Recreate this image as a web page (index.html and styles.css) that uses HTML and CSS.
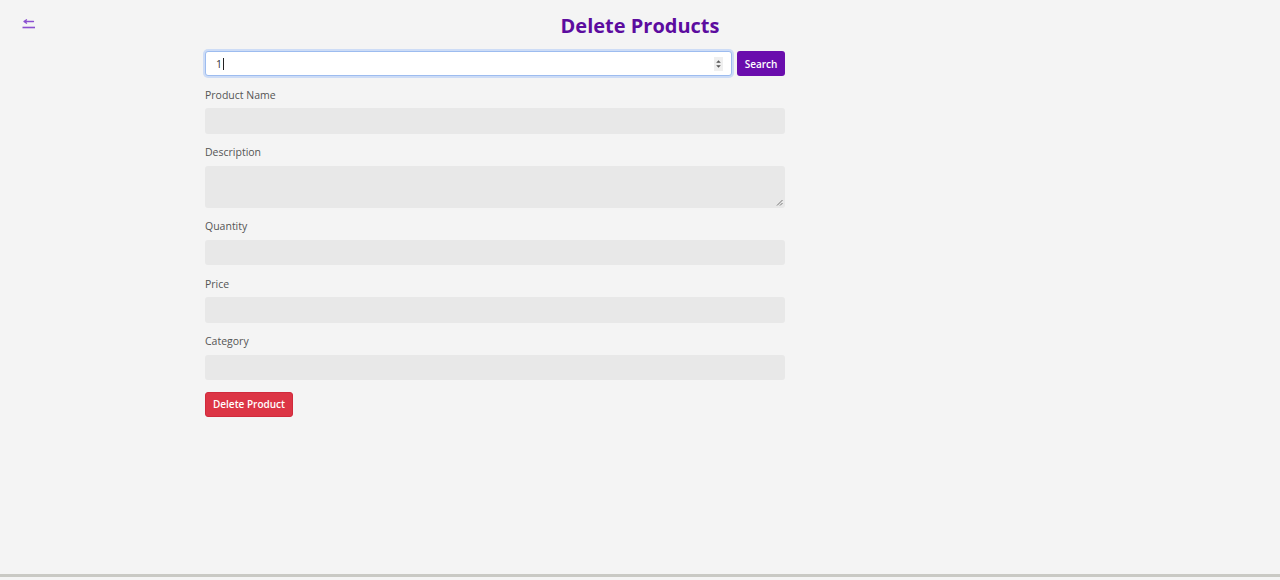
FILE: index.html
```html
<!DOCTYPE html>
<html lang="en">
<head>
<meta charset="utf-8">
<title>Delete Products</title>
<link rel="stylesheet" href="styles.css">
</head>
<body>
<div class="page">
  <header class="header">
    <a class="back" href="#" aria-label="Back">
      <svg width="14" height="10" viewBox="0 0 14 10"><path d="M2 2.5 H11.5 M2 2.5 L4.5 0.8 M2 2.5 L4.5 4.2" stroke="#8a4fd0" stroke-width="1.3" fill="none" stroke-linecap="round"/><path d="M0.5 8.5 H13" stroke="#8a4fd0" stroke-width="1.6"/></svg>
    </a>
    <h1 class="title">Delete Products</h1>
  </header>
  <form class="form">
    <div class="search-row">
      <div class="search-box">
        <span class="search-value">1</span><span class="caret"></span>
        <span class="spinner">
          <svg width="7" height="12" viewBox="0 0 7 12"><path d="M1.2 4.8 L3.5 2.2 L5.8 4.8 Z" fill="#555"/><path d="M1.2 7.2 L3.5 9.8 L5.8 7.2 Z" fill="#555"/></svg>
        </span>
      </div>
      <button type="button" class="btn btn-search">Search</button>
    </div>
    <div class="field">
      <label class="label">Product Name</label>
      <div class="input"></div>
    </div>
    <div class="field">
      <label class="label">Description</label>
      <div class="input textarea">
        <svg class="grip" width="7" height="7" viewBox="0 0 7 7"><path d="M6.5 1 L1 6.5 M6.5 4 L4 6.5" stroke="#777" stroke-width="1"/></svg>
      </div>
    </div>
    <div class="field">
      <label class="label">Quantity</label>
      <div class="input"></div>
    </div>
    <div class="field">
      <label class="label">Price</label>
      <div class="input"></div>
    </div>
    <div class="field">
      <label class="label">Category</label>
      <div class="input"></div>
    </div>
    <div class="actions">
      <button type="button" class="btn btn-delete">Delete Product</button>
    </div>
  </form>
</div>
</body>
</html>
```
FILE: styles.css
```css
* { box-sizing: border-box; }
html, body { margin: 0; padding: 0; }
body {
  background: #f4f4f4;
  font-family: "Open Sans", "Noto Sans", "Liberation Sans", sans-serif;
  color: #444;
}
.page {
  height: 577px;
  border-bottom: 3px solid #c9c9c4;
}
.header {
  display: flex;
  align-items: center;
  height: 51px;
  padding-left: 22px;
}
.back {
  display: flex;
  width: 14px;
  margin-top: -4px;
}
.title {
  flex: 1;
  margin: 0 0 0 -36px;
  text-align: center;
  font-size: 20px;
  font-weight: 700;
  color: #5c0c9f;
}
.form {
  width: 580px;
  margin-left: 205px;
  display: flex;
  flex-direction: column;
}
.search-row {
  display: flex;
  gap: 5px;
  height: 25px;
}
.search-box {
  flex: 1;
  display: flex;
  align-items: center;
  background: #fff;
  border: 1px solid #9dbcef;
  box-shadow: 0 0 0 2px #cddcf6;
  border-radius: 3px;
  padding-left: 10px;
  font-size: 10.5px;
  color: #333;
}
.caret {
  width: 1px;
  height: 12px;
  background: #222;
  margin-left: 1px;
}
.spinner {
  margin-left: auto;
  margin-right: 8px;
  display: flex;
  background: #efefef;
  padding: 1px 1px;
}
.btn {
  border: none;
  border-radius: 3px;
  color: #fff;
  font-family: inherit;
  font-size: 10px;
  font-weight: 600;
  padding: 0;
  cursor: pointer;
}
.btn-search {
  width: 48px;
  background: #6a0dad;
}
.field {
  display: flex;
  flex-direction: column;
  margin-top: 11.5px;
}
.label {
  font-size: 10.5px;
  line-height: 15px;
  color: #555;
  margin-bottom: 5.5px;
}
.input {
  height: 25.5px;
  background: #e8e8e8;
  border-radius: 3px;
}
.textarea {
  height: 42px;
  display: flex;
  justify-content: flex-end;
  align-items: flex-end;
  padding: 0 2px 2px 0;
}
.actions {
  margin-top: 11px;
}
.btn-delete {
  width: 88px;
  height: 25px;
  background: #dc3545;
  border: 1px solid #d02a3c;
}
```
